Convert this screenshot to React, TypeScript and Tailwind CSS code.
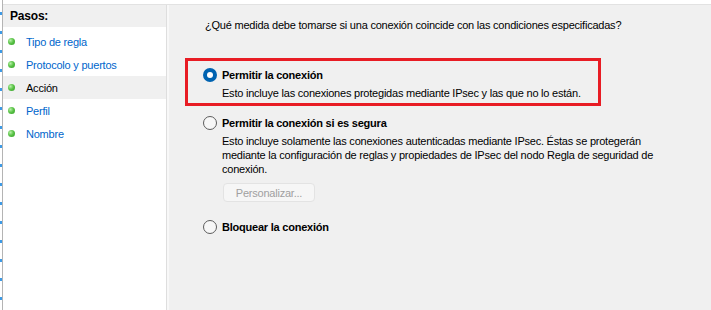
import React from 'react';

const PASOS = [
  { nombre: 'Tipo de regla', activo: false },
  { nombre: 'Protocolo y puertos', activo: false },
  { nombre: 'Acción', activo: true },
  { nombre: 'Perfil', activo: false },
  { nombre: 'Nombre', activo: false },
];

function Dot() {
  return (
    <span className="w-[7px] h-[7px] rounded-full bg-[radial-gradient(circle_at_35%_35%,#b8f0a8_0%,#5cc449_45%,#2f9a22_100%)] inline-block" />
  );
}

function Radio({ checked }: { checked?: boolean }) {
  if (checked) {
    return (
      <span className="w-[14px] h-[14px] rounded-full bg-[#0063b1] flex items-center justify-center shrink-0">
        <span className="w-[6px] h-[6px] rounded-full bg-white" />
      </span>
    );
  }
  return <span className="w-[14px] h-[14px] rounded-full border border-[#5c5c5c] bg-[#f7f7f7] shrink-0" />;
}

export default function App() {
  return (
    <div className="w-[711px] h-[310px] bg-white flex overflow-hidden text-[11px] tracking-[-0.22px] leading-[14px] text-black whitespace-nowrap font-['Liberation_Sans',Arial,sans-serif]">
      {/* tree remnant */}
      <div className="w-[3px] flex flex-col pt-[12px] gap-[16px] border-r border-[#b4b4b4]">
        {Array.from({ length: 16 }).map((_, i) => (
          <span key={i} className="w-[2px] h-[3px] bg-[#3d9ae6]" />
        ))}
      </div>

      <div className="flex-1 flex flex-col pt-[4px]">
        <div className="flex-1 flex border-t border-[#e2e2e2]">
          {/* Pasos */}
          <div className="w-[164px] bg-white border-r border-[#dedede]">
            <div className="h-[22px] bg-[#f0f0f0] flex items-center pl-[7px] font-bold text-[12px] tracking-[-0.2px]">Pasos:</div>
            <div className="pt-[3px]">
              {PASOS.map(p => (
                <div key={p.nombre}
                  className={`h-[23px] flex items-center pl-[5px] gap-[11px] ${p.activo ? 'bg-[#f0f0f0] text-black' : 'text-[#0066cc]'}`}>
                  <Dot />
                  <span>{p.nombre}</span>
                </div>
              ))}
            </div>
          </div>
          <div className="w-[2px] bg-[#f8f8f8]" />

          {/* Contenido */}
          <div className="flex-1 bg-[#f0f0f0] pt-[13px]">
            <p className="ml-[36px]">¿Qué medida debe tomarse si una conexión coincide con las condiciones especificadas?</p>

            <div className="ml-[16px] mt-[26px] w-[416px] border-[3px] border-[#e81c24] pl-[15px] pt-[7px] pb-[3px]">
              <div className="flex items-center gap-[5px]">
                <Radio checked />
                <span className="font-bold">Permitir la conexión</span>
              </div>
              <p className="ml-[19px] mt-[4px]">Esto incluye las conexiones protegidas mediante IPsec y las que no lo están.</p>
            </div>

            <div className="ml-[34px] mt-[10px]">
              <div className="flex items-center gap-[5px]">
                <Radio />
                <span className="font-bold">Permitir la conexión si es segura</span>
              </div>
              <div className="ml-[19px] mt-[4px]">
                <p>Esto incluye solamente las conexiones autenticadas mediante IPsec. Éstas se protegerán</p>
                <p>mediante la configuración de reglas y propiedades de IPsec del nodo Regla de seguridad de</p>
                <p>conexión.</p>
                <button disabled
                  className="mt-[7px] ml-[1px] w-[92px] h-[19px] rounded-[4px] border border-[#e3e3e3] bg-[#f6f6f6] text-[#a0a0a0] text-[11px]">
                  Personalizar...
                </button>
              </div>

              <div className="flex items-center gap-[5px] mt-[18px]">
                <Radio />
                <span className="font-bold">Bloquear la conexión</span>
              </div>
            </div>
          </div>
        </div>
      </div>
    </div>
  );
}
